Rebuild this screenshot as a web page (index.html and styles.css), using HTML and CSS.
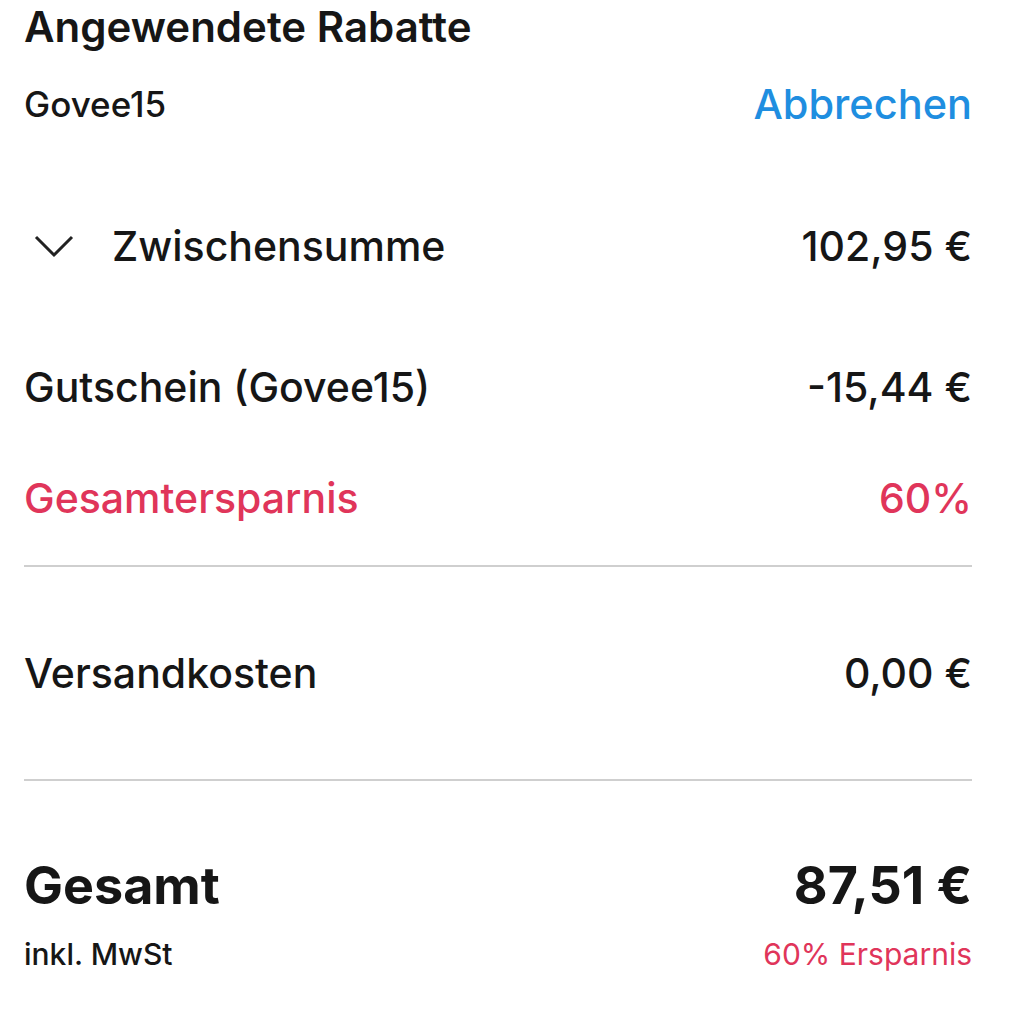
FILE: index.html
```html
<!DOCTYPE html>
<html lang="de">
<head>
  <meta charset="UTF-8">
  <meta name="viewport" content="width=device-width, initial-scale=1.0">
  <title>Bestellübersicht</title>
  <link rel="stylesheet" href="styles.css">
</head>
<body>
  <div class="summary">
    <h2 class="title">Angewendete Rabatte</h2>
    <div class="row coupon">
      <span class="code">Govee15</span>
      <a class="cancel" href="#">Abbrechen</a>
    </div>

    <div class="row subtotal">
      <span class="label">
        <svg class="chevron" viewBox="0 0 40 24" width="40" height="24">
          <path d="M2 3 L20 21 L38 3" fill="none" stroke="#222" stroke-width="3"/>
        </svg>
        Zwischensumme
      </span>
      <span>102,95 €</span>
    </div>
    <div class="row voucher">
      <span>Gutschein (Govee15)</span>
      <span>-15,44 €</span>
    </div>
    <div class="row savings">
      <span>Gesamtersparnis</span>
      <span>60%</span>
    </div>

    <hr class="divider">

    <div class="row shipping">
      <span>Versandkosten</span>
      <span>0,00 €</span>
    </div>

    <hr class="divider">

    <div class="total">
      <div class="row total-main">
        <span>Gesamt</span>
        <span>87,51 €</span>
      </div>
      <div class="row total-sub">
        <span class="tax">inkl. MwSt</span>
        <span class="saved">60% Ersparnis</span>
      </div>
    </div>
  </div>
</body>
</html>
```

FILE: styles.css
```css
body {
  margin: 0;
  padding: 0;
  background: #fff;
  color: #161616;
  font-family: Inter, "Liberation Sans", Arial, sans-serif;
}
.summary {
  width: 948px;
  padding: 0 48px 0 24px;
}
.title {
  margin: 0;
  padding-top: 4px;
  font-size: 42px;
  font-weight: 600;
  line-height: 46px;
}
.row {
  display: flex;
  justify-content: space-between;
  align-items: center;
  font-size: 41px;
  font-weight: 500;
  line-height: 48px;
}
.coupon {
  padding-top: 30px;
}
.coupon .code {
  font-size: 35px;
}
.cancel {
  color: #1f8ee0;
  text-decoration: none;
  font-size: 41.5px;
}
.subtotal {
  padding-top: 94px;
}
.label {
  display: flex;
  align-items: center;
  gap: 38px;
  padding-left: 10px;
}
.chevron {
  display: block;
}
.voucher {
  padding-top: 93px;
}
.savings {
  padding-top: 63px;
  color: #e0355a;
}
.divider {
  border: 0;
  border-top: 2px solid #cfcfcf;
  margin: 43px 0 0;
}
.shipping {
  padding: 82px 0 82px;
}
.shipping + .divider {
  margin-top: 0;
}
.total {
  padding-top: 77px;
}
.total-main {
  font-size: 52px;
  font-weight: 700;
  line-height: 56px;
}
.total-sub {
  padding-top: 22px;
  font-size: 30px;
  line-height: 36px;
}
.saved {
  color: #e0355a;
  font-size: 30px;
  font-weight: 400;
}
```
